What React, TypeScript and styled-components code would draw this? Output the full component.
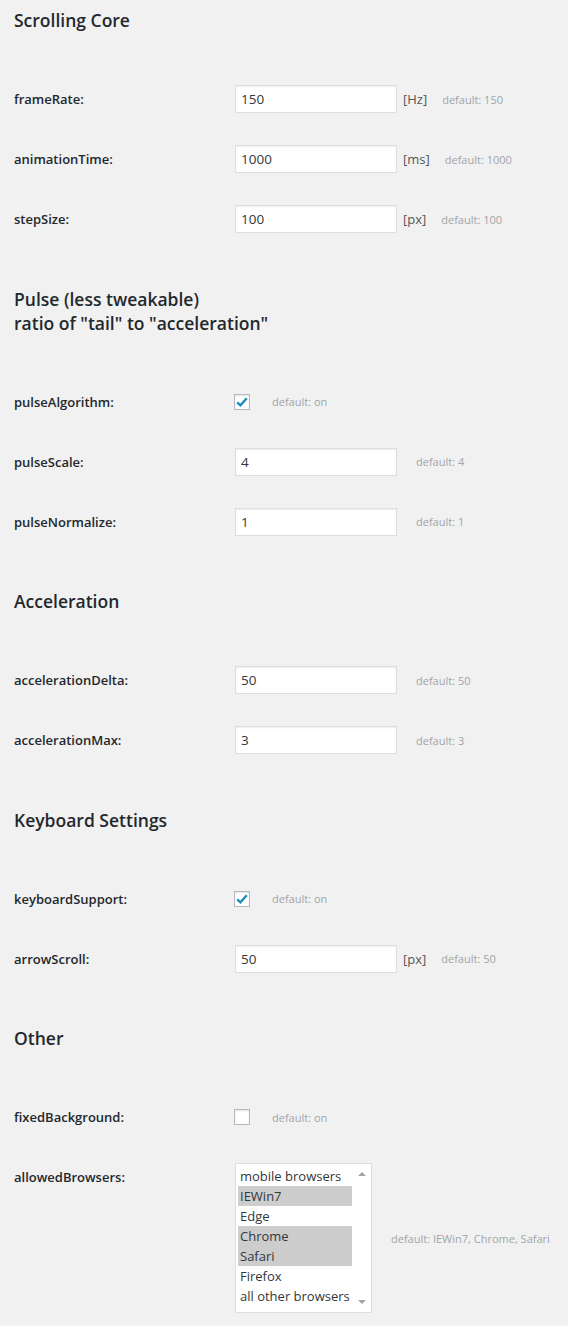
import React from "react";
import styled, { createGlobalStyle } from "styled-components";

const Global = createGlobalStyle`
  html, body { margin: 0; padding: 0; background: #f1f1f1; }
  body { font-family: "Open Sans", "Noto Sans", Arial, sans-serif; color: #23282d; }
`;

const Page = styled.div`
  padding: 8px 14px 0 14px;
  display: flex;
  flex-direction: column;
`;

const Section = styled.section`
  display: flex;
  flex-direction: column;
  & + & { margin-top: 37.5px; }
`;

const Heading = styled.h2`
  margin: 0 0 37px 0;
  font-size: 17.5px;
  line-height: 24px;
  font-weight: 600;
  color: #23282d;
`;

const Row = styled.div`
  display: grid;
  grid-template-columns: 220px 1fr;
  min-height: 60px;
`;

const Label = styled.div`
  padding-top: 20px;
  font-size: 13px;
  line-height: 20px;
  font-weight: 600;
  color: #23282d;
`;

const Control = styled.div<{ $pad: number }>`
  display: flex;
  align-items: center;
  padding: ${(p) => p.$pad}px 0;
  align-self: start;
`;

const TextInput = styled.input`
  box-sizing: border-box;
  width: 162px;
  height: 28px;
  margin: 0 0 0 1px;
  padding: 0 5px;
  border: 1px solid #ddd;
  background: #fff;
  box-shadow: inset 0 1px 2px rgba(0, 0, 0, 0.07);
  font-family: inherit;
  font-size: 13.5px;
  color: #32373c;
  outline: none;
`;

const Unit = styled.span`
  margin-left: 6px;
  font-size: 13px;
  color: #555;
`;

const Default = styled.span<{ $gap: number }>`
  margin-left: ${(p) => p.$gap}px;
  font-size: 11px;
  color: #a0a5aa;
  white-space: nowrap;
`;

const CheckBox = styled.span<{ $on: boolean }>`
  box-sizing: border-box;
  width: 16px;
  height: 16px;
  border: 1px solid #b4b9be;
  background: #fff;
  box-shadow: inset 0 1px 2px rgba(0, 0, 0, 0.1);
  display: flex;
  align-items: center;
  justify-content: center;
`;

const ListBox = styled.div`
  box-sizing: border-box;
  margin-left: 1px;
  width: 137px;
  height: 150px;
  border: 1px solid #ddd;
  background: #fff;
  display: flex;
  padding: 2px 0 2px 2px;
`;

const Options = styled.div`
  display: flex;
  flex-direction: column;
  width: 114px;
`;

const Option = styled.div<{ $sel: boolean }>`
  height: 20px;
  line-height: 20px;
  padding-left: 2px;
  font-size: 13px;
  color: #32373c;
  white-space: nowrap;
  overflow: hidden;
  background: ${(p) => (p.$sel ? "#cdcdcd" : "transparent")};
`;

const ScrollTrack = styled.div`
  flex: 1;
  display: flex;
  flex-direction: column;
  justify-content: space-between;
  align-items: center;
  padding: 6px 0 6px;
`;

const Arrow = styled.span<{ $up: boolean }>`
  width: 0;
  height: 0;
  border-left: 4px solid transparent;
  border-right: 4px solid transparent;
  ${(p) =>
    p.$up ? "border-bottom: 4px solid #a3a3a3;" : "border-top: 4px solid #a3a3a3;"}
`;

const SideNote = styled.div`
  display: flex;
  align-items: center;
`;

type RowDef =
  | { kind: "text"; label: string; value: string; unit?: string; def: string }
  | { kind: "check"; label: string; on: boolean; def: string }
  | { kind: "list"; label: string; options: string[]; selected: string[]; def: string };

const sections: { title: string[]; rows: RowDef[] }[] = [
  {
    title: ["Scrolling Core"],
    rows: [
      { kind: "text", label: "frameRate:", value: "150", unit: "[Hz]", def: "default: 150" },
      { kind: "text", label: "animationTime:", value: "1000", unit: "[ms]", def: "default: 1000" },
      { kind: "text", label: "stepSize:", value: "100", unit: "[px]", def: "default: 100" },
    ],
  },
  {
    title: ["Pulse (less tweakable)", 'ratio of "tail" to "acceleration"'],
    rows: [
      { kind: "check", label: "pulseAlgorithm:", on: true, def: "default: on" },
      { kind: "text", label: "pulseScale:", value: "4", def: "default: 4" },
      { kind: "text", label: "pulseNormalize:", value: "1", def: "default: 1" },
    ],
  },
  {
    title: ["Acceleration"],
    rows: [
      { kind: "text", label: "accelerationDelta:", value: "50", def: "default: 50" },
      { kind: "text", label: "accelerationMax:", value: "3", def: "default: 3" },
    ],
  },
  {
    title: ["Keyboard Settings"],
    rows: [
      { kind: "check", label: "keyboardSupport:", on: true, def: "default: on" },
      { kind: "text", label: "arrowScroll:", value: "50", unit: "[px]", def: "default: 50" },
    ],
  },
  {
    title: ["Other"],
    rows: [
      { kind: "check", label: "fixedBackground:", on: false, def: "default: on" },
      {
        kind: "list",
        label: "allowedBrowsers:",
        options: ["mobile browsers", "IEWin7", "Edge", "Chrome", "Safari", "Firefox", "all other browsers"],
        selected: ["IEWin7", "Chrome", "Safari"],
        def: "default: IEWin7, Chrome, Safari",
      },
    ],
  },
];

const Check = () => (
  <svg width="14" height="14" viewBox="0 0 14 14">
    <path d="M2.2 7.3 L5.4 10.3 L11.8 3.2" fill="none" stroke="#1e8cbe" strokeWidth="2.4" />
  </svg>
);

function Field({ row }: { row: RowDef }) {
  if (row.kind === "text") {
    return (
      <Control $pad={16}>
        <TextInput defaultValue={row.value} />
        {row.unit && <Unit>{row.unit}</Unit>}
        <Default $gap={row.unit ? 15 : 19}>{row.def}</Default>
      </Control>
    );
  }
  if (row.kind === "check") {
    return (
      <Control $pad={22}>
        <CheckBox $on={row.on}>{row.on && <Check />}</CheckBox>
        <Default $gap={22}>{row.def}</Default>
      </Control>
    );
  }
  return (
    <Control $pad={16}>
      <ListBox>
        <Options>
          {row.options.map((o) => (
            <Option key={o} $sel={row.selected.includes(o)}>
              {o}
            </Option>
          ))}
        </Options>
        <ScrollTrack>
          <Arrow $up />
          <Arrow $up={false} />
        </ScrollTrack>
      </ListBox>
      <SideNote>
        <Default $gap={19}>{row.def}</Default>
      </SideNote>
    </Control>
  );
}

export default function App() {
  return (
    <>
      <Global />
      <Page>
        {sections.map((s) => (
          <Section key={s.title[0]}>
            <Heading>
              {s.title.map((t, i) => (
                <React.Fragment key={t}>
                  {i > 0 && <br />}
                  {t}
                </React.Fragment>
              ))}
            </Heading>
            {s.rows.map((r) => (
              <Row key={r.label}>
                <Label>{r.label}</Label>
                <Field row={r} />
              </Row>
            ))}
          </Section>
        ))}
      </Page>
    </>
  );
}
